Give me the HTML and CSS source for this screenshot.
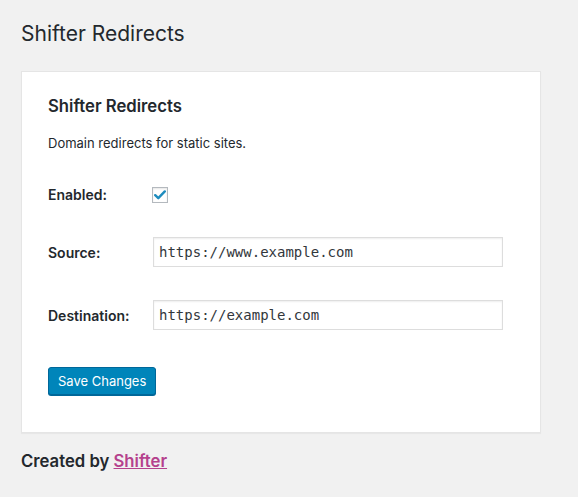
FILE: index.html
```html
<!DOCTYPE html>
<html>
<head>
<meta charset="utf-8">
<link rel="stylesheet" href="styles.css">
</head>
<body>
<div class="wrap">
  <h1 class="page-title">Shifter Redirects</h1>
  <div class="card">
    <h2 class="card-title">Shifter Redirects</h2>
    <p class="desc">Domain redirects for static sites.</p>
    <div class="form">
      <div class="row row-check">
        <label class="label">Enabled:</label>
        <span class="checkbox">
          <svg width="12" height="10" viewBox="0 0 12 10"><path d="M1.2 5.2 L4.3 8.2 L10.8 1.4" fill="none" stroke="#1e8cbe" stroke-width="2.4" stroke-linecap="round" stroke-linejoin="round"/></svg>
        </span>
      </div>
      <div class="row">
        <label class="label">Source:</label>
        <div class="input">https://www.example.com</div>
      </div>
      <div class="row">
        <label class="label">Destination:</label>
        <div class="input">https://example.com</div>
      </div>
    </div>
    <button class="btn">Save Changes</button>
  </div>
  <p class="footer">Created by <a href="#" class="link">Shifter</a></p>
</div>
</body>
</html>
```
FILE: styles.css
```css
html, body {
  margin: 0;
  padding: 0;
  background: #f1f1f1;
}
body {
  font-family: Inter, Roboto, "Noto Sans", sans-serif;
  color: #23282d;
  font-size: 13px;
}
.wrap {
  padding: 20px 37px 0 21px;
}
.page-title {
  margin: 0;
  font-size: 21px;
  font-weight: 400;
  line-height: 27px;
  color: #23282d;
}
.card {
  margin-top: 24px;
  background: #fff;
  border: 1px solid #e5e5e5;
  box-shadow: 0 1px 1px rgba(0,0,0,0.04);
  padding: 22px 26px 37px;
}
.card-title {
  margin: 0;
  font-size: 16.7px;
  font-weight: 600;
  line-height: 24px;
}
.desc {
  margin: 16px 0 0;
  line-height: 18px;
}
.form {
  margin-top: 34px;
  display: flex;
  flex-direction: column;
  gap: 33px;
}
.row-check + .row {
  margin-top: 1px;
}
.row {
  display: flex;
  align-items: center;
}
.label {
  width: 104px;
  font-size: 14px;
  font-weight: 600;
}
.checkbox {
  width: 14px;
  height: 14px;
  border: 1px solid #b4b9be;
  box-shadow: inset 0 1px 2px rgba(0,0,0,0.1);
  display: flex;
  align-items: center;
  justify-content: center;
}
.input {
  margin-left: 1px;
  width: 338px;
  height: 28px;
  border: 1px solid #ddd;
  box-shadow: inset 0 1px 2px rgba(0,0,0,0.07);
  font-family: "DejaVu Sans Mono", "Liberation Mono", monospace;
  font-size: 14px;
  line-height: 28px;
  padding: 0 5px;
  color: #32373c;
}
.btn {
  margin-top: 37px;
  display: block;
  height: 28px;
  padding: 0 9px;
  background: #0085ba;
  border: 1px solid #006799;
  border-radius: 3px;
  box-shadow: 0 1px 0 #006799;
  color: #fff;
  font-family: inherit;
  font-size: 13px;
  line-height: 26px;
}
.footer {
  margin: 18px 0 0;
  font-size: 16.7px;
  font-weight: 600;
  line-height: 20px;
}
.link {
  color: #b5418d;
  text-decoration: underline;
}
```
